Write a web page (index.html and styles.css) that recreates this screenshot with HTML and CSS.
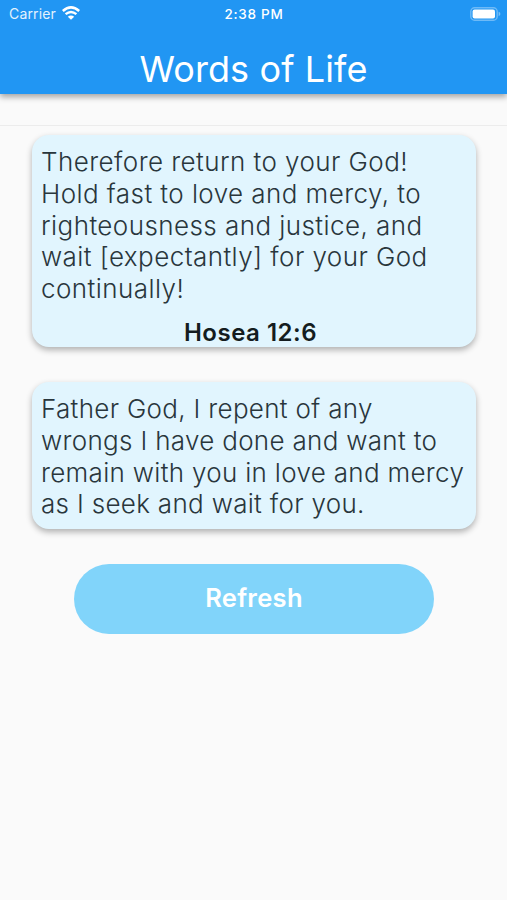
FILE: index.html
```html
<!DOCTYPE html>
<html lang="en">
<head>
  <meta charset="UTF-8">
  <title>Words of Life</title>
  <link rel="stylesheet" href="styles.css">
</head>
<body>

  <header class="app-bar">
    <div class="status-bar">
      <div class="carrier">
        <span>Carrier</span>
        <svg class="wifi" viewBox="0 0 18 14" width="18" height="14">
          <path d="M0.8 5 Q9 -2.2 17.2 5" fill="none" stroke="#fff" stroke-width="2.6"/>
          <path d="M3.6 8.2 Q9 3.6 14.4 8.2" fill="none" stroke="#fff" stroke-width="2.4"/>
          <path d="M5.8 10.8 Q9 8 12.2 10.8 L9 13.8 Z" fill="#fff"/>
        </svg>
      </div>
      <span class="time">2:38 PM</span>
      <svg class="battery" viewBox="0 0 31 14" width="31" height="14">
        <rect x="0.8" y="0.8" width="26.4" height="12.4" rx="3.8" fill="none" stroke="#fff" stroke-opacity="0.35" stroke-width="1.4"/>
        <rect x="2.6" y="2.5" width="22.4" height="9" rx="2" fill="#fff"/>
        <path d="M28.6 4.8 Q30.4 5.4 30.4 7 Q30.4 8.6 28.6 9.2 Z" fill="#fff" fill-opacity="0.4"/>
      </svg>
    </div>
    <h1>Words of Life</h1>
  </header>

  <div class="divider"></div>

  <main>
    <section class="card verse">
      <p>Therefore return to your God!<br>
      Hold fast to love and mercy, to<br>
      righteousness and justice, and<br>
      wait [expectantly] for your God<br>
      continually!</p>
      <h2>Hosea 12:6</h2>
    </section>

    <section class="card prayer">
      <p>Father God, I repent of any<br>
      wrongs I have done and want to<br>
      remain with you in love and mercy<br>
      as I seek and wait for you.</p>
    </section>

    <button type="button" class="refresh">Refresh</button>
  </main>

</body>
</html>
```

FILE: styles.css
```css
body {
  margin: 0;
  height: 900px;
  overflow: hidden;
  font-family: Inter, "Liberation Sans", sans-serif;
  background-color: #fafafa;
}
.app-bar {
  height: 94px;
  box-sizing: border-box;
  background-color: #2196f3;
  color: #fff;
  box-shadow: 0 3px 6px rgba(0, 0, 0, 0.35);
}
.status-bar {
  display: grid;
  grid-template-columns: 1fr auto 1fr;
  align-items: center;
  height: 27px;
  padding: 0 6px 0 9px;
  font-size: 14px;
}
.carrier {
  display: flex;
  align-items: center;
  gap: 6px;
  letter-spacing: 0.15px;
  color: #e3f2fd;
}
.wifi {
  margin-bottom: 2px;
}
.time {
  font-size: 13.5px;
  font-weight: 500;
  letter-spacing: 0.75px;
  margin-right: 2px;
}
.battery {
  justify-self: end;
}
h1 {
  margin: 19px 0 0;
  font-size: 36px;
  font-weight: 400;
  line-height: 46px;
  letter-spacing: 0.1px;
  text-align: center;
}
.divider {
  height: 31px;
  border-bottom: 1px solid #ececec;
}
main {
  display: flex;
  flex-direction: column;
  padding: 9px 31px 0 32px;
}
.card {
  box-sizing: border-box;
  padding: 11px 9px 0;
  border-radius: 17px;
  background-color: #e1f5fe;
  box-shadow: 0 3px 6px rgba(0, 0, 0, 0.3);
}
.card p {
  margin: 0;
  font-size: 26px;
  font-weight: 300;
  line-height: 31.8px;
  white-space: nowrap;
  color: #29363c;
}
.verse {
  height: 212px;
}
.verse p {
  letter-spacing: 0.43px;
}
.verse h2 {
  margin: 13px 0 0;
  padding-right: 7px;
  font-size: 24px;
  font-weight: 600;
  line-height: 30px;
  letter-spacing: 0.5px;
  text-align: center;
  color: #141c20;
}
.prayer {
  height: 147px;
  margin-top: 35px;
}
.prayer p {
  letter-spacing: 0.31px;
}
.refresh {
  width: 360px;
  height: 70px;
  margin: 35px 0 0 42px;
  padding: 0 0 3px;
  border: none;
  border-radius: 35px;
  background-color: #81d4fa;
  color: #fff;
  font-family: inherit;
  font-size: 25.5px;
  font-weight: 600;
  letter-spacing: 0.3px;
  cursor: pointer;
}
```
